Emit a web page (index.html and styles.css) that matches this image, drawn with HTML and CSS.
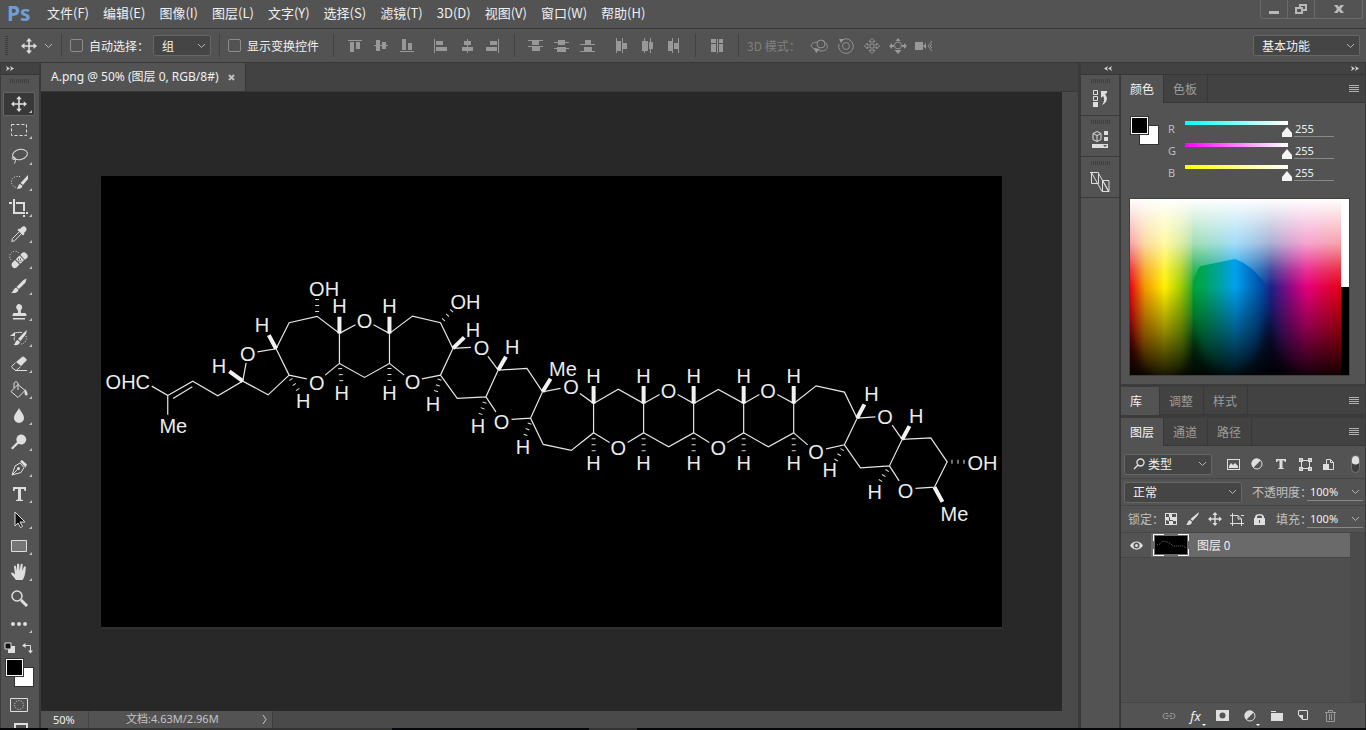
FILE: index.html
```html
<!DOCTYPE html>
<html lang="zh-CN">
<head>
<meta charset="utf-8">
<title>A.png @ 50% (图层 0, RGB/8#)</title>
<link rel="stylesheet" href="styles.css">
</head>
<body>
<div class="app">
  <header class="menubar">
    <span class="logo">Ps</span>
    <nav class="menus">
      <button>文件(F)</button><button>编辑(E)</button><button>图像(I)</button><button>图层(L)</button><button>文字(Y)</button><button>选择(S)</button><button>滤镜(T)</button><button>3D(D)</button><button>视图(V)</button><button>窗口(W)</button><button>帮助(H)</button>
    </nav>
    <div class="window-buttons">
      <button class="win" aria-label="最小化"><svg width="12" height="12"><path d="M1 8h10v3H1z"/></svg></button>
      <button class="win" aria-label="还原"><svg width="14" height="12"><path fill-rule="evenodd" d="M5 1h8v7H9v3H1V4h4zM7 3v1h2v2h2V3zM3 6v3h4V6z"/></svg></button>
      <button class="win close" aria-label="关闭"><svg width="12" height="12"><path d="M1 2h3.500L6 4l1.500-2H11L8 6l3 4H7.500L6 8l-1.500 2H1l3-4z"/></svg></button>
    </div>
  </header>

  <div class="options">
    <span class="grip-v"></span>
    <button class="tool-preset" aria-label="移动工具"><svg width="16" height="16"><path d="M8 0l3 3.500H8.800v3.700h3.700V5L16 8l-3.500 3V8.800H8.800v3.700H11L8 16l-3-3.500h2.200V8.800H3.500V11L0 8l3.500-3v2.200h3.700V3.500H5z"/></svg><svg class="chev" width="9" height="6"><path d="M1 1l3.500 3.500L8 1"/></svg></button>
    <i class="sep"></i>
    <label class="check"><input type="checkbox">自动选择：</label>
    <div class="select group-select"><select aria-label="自动选择目标"><option>组</option></select><svg class="chev" width="9" height="6"><path d="M1 1l3.500 3.500L8 1"/></svg></div>
    <i class="sep"></i>
    <label class="check"><input type="checkbox">显示变换控件</label>
    <i class="sep wide"></i>
    <div class="icons">
      <button aria-label="顶对齐"><svg width="16" height="16"><path d="M1 2h14v1H1zM3 4h4v10H3zM9 4h4v7H9z"/></svg></button>
      <button aria-label="垂直居中对齐"><svg width="16" height="16"><path d="M3 2h4v5h2V4h4v3h2v1h-2v3H9V8H7v5H3V8H1V7h2z"/></svg></button>
      <button aria-label="底对齐"><svg width="16" height="16"><path d="M1 13h14v1H1zM3 1h4v11H3zM9 5h4v7H9z"/></svg></button>
    </div>
    <div class="icons">
      <button aria-label="左对齐"><svg width="16" height="16"><path d="M1 1h1v14H1zM3 3h7v4H3zM3 9h11v4H3z"/></svg></button>
      <button aria-label="水平居中对齐"><svg width="16" height="16"><path d="M8 1h1v2h3v4H9v2h5v4H9v2H8v-2H3V9h5V7H5V3h3z"/></svg></button>
      <button aria-label="右对齐"><svg width="16" height="16"><path d="M13 1h1v14h-1zM5 3h7v4H5zM1 9h11v4H1z"/></svg></button>
    </div>
    <i class="sep"></i>
    <div class="icons">
      <button aria-label="按顶分布"><svg width="16" height="16"><path d="M0 2h15v1h-4v4H4V3H0zM0 8h15v1h-3v4H4V9H0z"/></svg></button>
      <button aria-label="垂直居中分布"><svg width="16" height="16"><path d="M4 2h7v2h4v1h-4v2H4V5H0V4h4zM3 9h9v1h3v1h-3v3H3v-3H0v-1h3z"/></svg></button>
      <button aria-label="按底分布"><svg width="16" height="16"><path d="M5 2h6v4h4v1H0V6h5zM4 9h8v4h3v1H0v-1h4z"/></svg></button>
    </div>
    <div class="icons">
      <button aria-label="按左分布"><svg width="16" height="16"><path d="M2 0h1v3h4v10H3v2H2zM8 0h1v5h4v6H9v4H8z"/></svg></button>
      <button aria-label="水平居中分布"><svg width="16" height="16"><path d="M4 0h1v3h3v10H5v2H4v-2H2V3h2zM10 0h1v4h2v7h-2v4h-1v-4H9V4h1z"/></svg></button>
      <button aria-label="按右分布"><svg width="16" height="16"><path d="M6 0h1v15H6v-2H2V3h4zM12 0h1v15h-1v-4H8V5h4z"/></svg></button>
    </div>
    <i class="sep"></i>
    <div class="icons"><button aria-label="自动对齐图层"><svg width="16" height="16"><path d="M2 1h5v4H2zM2 6h5v8H2zM8 1h1v14H8zM10 1h4v4h-4zM10 6h4v8h-4z"/></svg></button></div>
    <i class="sep"></i>
    <span class="mode">3D 模式：</span>
    <div class="icons dim">
      <button aria-label="旋转 3D 对象"><svg class="line" width="20" height="16"><circle cx="11" cy="6" r="4"/><path d="M7 4C0 5-1 9 6 12M13 3c6 3 6 10-2 10H9"/><path class="solid" d="M4 10l6 1-4 4z"/></svg></button>
      <button aria-label="滚动 3D 对象"><svg class="line" width="18" height="16"><circle cx="9" cy="8" r="3.500"/><path d="M5 2a7.300 7.300 0 1 1-3 4"/><path class="solid" d="M2 1h5L4 5z"/></svg></button>
      <button aria-label="拖动 3D 对象"><svg class="line" width="18" height="16"><path d="M9 .5l3 3h-2V7h3.500V5l3 3-3 3V9H10v3.500h2l-3 3-3-3h2V9H4.500v2l-3-3 3-3v2H8V3.500H6z"/></svg></button>
      <button aria-label="滑动 3D 对象"><svg class="line" width="18" height="16"><circle cx="9" cy="7.500" r="3.500"/><path class="solid" d="M9 0l2.500 3h-5zM9 16l3.500-4h-7zM0 8l3-3v2h2v2H3v2zM18 8l-3-3v2h-2v2h2v2z"/></svg></button>
      <button aria-label="缩放 3D 对象"><svg class="line" width="18" height="16"><path class="solid" d="M0 4h8v8H0zM8 8l3-3v6z"/><path d="M17 3l-4 5 4 5M17 6l-2 2 2 2"/></svg></button>
    </div>
    <div class="select workspace-select"><select aria-label="工作区"><option>基本功能</option></select><svg class="chev" width="9" height="6"><path d="M1 1l3.500 3.500L8 1"/></svg></div>
  </div>

  <div class="body">
    <aside class="toolbar">
      <button class="strip-head" aria-label="展开工具栏"><svg width="8" height="5"><path d="M0 0l4 2.500L0 5 1 2.500zM4 0l4 2.500L4 5l1-2.500z"/></svg></button>
      <div class="grip-h"></div>
      <div class="tools">
        <button class="tool active" aria-label="移动"><svg viewBox="0 0 20 20"><path class="f" d="M10 2l2.800 3.300h-2V9.200h4V7.200L18 10l-3.200 2.800v-2h-4v4h2L10 18l-2.800-3.200h2v-4h-4v2L2 10l3.200-2.800v2h4v-4h-2z"/></svg></button>
        <button class="tool" aria-label="矩形选框"><svg viewBox="0 0 20 20"><path class="s" stroke-dasharray="3 2" d="M2.500 4.500h15v11h-15z"/></svg></button>
        <button class="tool" aria-label="套索"><svg viewBox="0 0 20 20"><ellipse class="s" cx="11" cy="8.500" rx="7.500" ry="5" transform="rotate(-12 11 8.500)"/><path class="s" d="M5 11c-3 0-2 3 0 2.500s1.500-2 0-2.500M6 13c1 2 0 4-1 4.500"/></svg></button>
        <button class="tool" aria-label="快速选择"><svg viewBox="0 0 20 20"><path class="s" stroke-dasharray="1 1.500" d="M11 4.500H8a5.500 5.500 0 0 0 0 11"/><path class="f" d="M19 3v4l-5 6-2.500-2zM11 12l2.500 2c-1 3-3 3-6 2.500 2-1 1.500-4 3.500-4.500z"/></svg></button>
        <button class="tool" aria-label="裁剪"><svg viewBox="0 0 20 20"><path class="f" d="M0 4h3v2H0zM4 1h2v13h10v2H4zM7 4h9v9h-2V6H7zM14 17h2v2h-2zM17 14h2v2h-2z"/></svg></button>
        <button class="tool" aria-label="吸管"><svg viewBox="0 0 20 20"><path class="f" d="M13 3c2-2 6 1 4 4l-2 2 .5 1L14 11.500 8.500 6 10 4.500l1 .5z"/><path class="s" d="M10 8l-6.500 6.500-.8 3 3-.8L12 10"/></svg></button>
        <button class="tool" aria-label="污点修复"><svg viewBox="0 0 20 20"><path class="s" stroke-dasharray="1 1.500" d="M2 10a5 5 0 0 1 8-7"/><path class="f" fill-rule="evenodd" d="M3 13l3-3 4.500 4.500-3 3c-3 2-6-1-4.500-4.500zM6.800 9.200l3.700-3.700 4.500 4.500-3.700 3.700zM11.300 4.700l2-2c2-2 7 2 5 5l-2.500 2zM9 8.500v1.500h1V8.500zM11 8.500V10h1V8.500zM9.500 10.500v1.300h1v-1.300zM11.500 10.500v1.300h1v-1.300z"/></svg></button>
        <button class="tool" aria-label="画笔"><svg viewBox="0 0 20 20"><path class="f" d="M17.500 2.500l-1 4-6.500 6.500-2.500-2 7-7zM7 11.500l2.500 2c-.5 3-3 4-7.500 3.500 2.500-1 2-4 5-5.500z"/></svg></button>
        <button class="tool" aria-label="仿制图章"><svg viewBox="0 0 20 20"><path class="f" d="M10 2a3.300 3.300 0 0 1 3 4.500C12 8 11.500 9 12 11h4c1 0 1.500 1 1.500 3h-14c0-2 .5-3 1.500-3h4c.5-2-.5-3-1.500-4.500C6.500 4.500 8 2 10 2zM4 16h12v1.500H4z"/></svg></button>
        <button class="tool" aria-label="历史记录画笔"><svg viewBox="0 0 20 20"><path class="f" d="M18 2l-1 4-5.500 7-2.500-2 5.500-6zM8.500 12l2.500 2c-1 3-3 3.500-6.500 3 2-1 1.500-4 4-5zM1 8l5-4v4z"/><path class="s" d="M5 5.500c2-1 5-1.500 8-1M6 8.500c-1 1.500-1 2-.5 4"/><path class="s" stroke-dasharray="1 1.500" d="M17 8c1 4-1 8-5 8"/></svg></button>
        <button class="tool" aria-label="橡皮擦"><svg viewBox="0 0 20 20"><path class="f" d="M7 8l6-5c1-1 2-.5 5 3l-6 6z"/><path class="s" d="M6.500 8.800L3 12c-.7.700-.5 1 0 1.500L6 16c.6.500 1 .5 1.700 0l3.800-3.200M6 16.500h12"/></svg></button>
        <button class="tool" aria-label="油漆桶"><svg viewBox="0 0 20 20"><path class="s" d="M9 4.500l7 6-7 7-7-6zM9 10V4c0-3-4-3-4 0v4"/><path class="f" d="M16 9c2.500 3 3.500 6 1.500 6.500S15 12 16 9z"/></svg></button>
        <button class="tool" aria-label="模糊"><svg viewBox="0 0 20 20"><path class="f" d="M10 2c2 4 5 6.500 5 10a5 5 0 0 1-10 0c0-3.500 3-6 5-10z"/></svg></button>
        <button class="tool" aria-label="减淡"><svg viewBox="0 0 20 20"><path class="f" d="M12 2.500a5 5 0 1 1-2.500 9.200L3.500 17.500 2 16l6-6A5 5 0 0 1 12 2.500z"/></svg></button>
        <button class="tool" aria-label="钢笔"><svg viewBox="0 0 20 20"><path class="s" d="M3 17L6 8l5-3 4 4.500-3 5zM3 17l6-6"/><circle class="f" cx="9.500" cy="10.500" r="1.500"/><path class="f" d="M11 3.500l2-1.500 5 4.500-1.500 3z"/></svg></button>
        <button class="tool" aria-label="文字"><svg viewBox="0 0 20 20"><path class="f" d="M4 3h13v4h-1.500L15 5h-3v10.500l2 .5v1H7v-1l2-.5V5H6l-.5 2H4z"/></svg></button>
        <button class="tool" aria-label="路径选择"><svg viewBox="0 0 20 20"><path class="outlined" d="M6 2v14l3-3 2.500 4.500 2-1L11 12h5z"/></svg></button>
        <button class="tool" aria-label="矩形"><svg viewBox="0 0 20 20"><path class="s shape" d="M2.500 4.500h15v11h-15z"/></svg></button>
        <button class="tool" aria-label="抓手"><svg viewBox="0 0 20 20"><path class="f" d="M7 18c-2-3-5-5.500-5-7 1-1.500 2.500 0 4 1.500L5 4.500c.5-1.500 1.800-1 2 0L8 9V2.500c.5-1.500 2-1.500 2.200 0L10.500 9l1.200-6.500c.5-1.300 2-1 2 .3L13.200 9l1.700-4c.7-1.200 2-.6 1.900.5C16.500 10 16 15 13.500 18z"/></svg></button>
        <button class="tool bare" aria-label="缩放"><svg viewBox="0 0 20 20"><circle class="s lensring" cx="8" cy="8" r="5"/><path class="s thick2" d="M12 12l6 6"/></svg></button>
        <button class="tool" aria-label="更多工具"><svg viewBox="0 0 20 20"><circle class="f" cx="4" cy="10" r="2"/><circle class="f" cx="10" cy="10" r="2"/><circle class="f" cx="16" cy="10" r="2"/></svg></button>
      </div>
      <div class="mini-row">
        <button aria-label="默认颜色"><svg width="12" height="12"><path class="f" d="M4 4h7v7H4z"/><path class="outlined" d="M1 1h6v6H1z"/></svg></button>
        <button aria-label="切换颜色"><svg width="12" height="12"><path class="s" d="M3 3.500h5.500V9"/><path class="f" d="M0 3.500L3.500 1v5zM8.500 11.500L6 8.500h5z"/></svg></button>
      </div>
      <div class="swatches"><span class="swatch back"></span><span class="swatch fore"></span></div>
      <button class="mask" aria-label="快速蒙版"><svg width="18" height="14"><path class="s" d="M.5 .5h17v13H.5z"/><circle class="s" stroke-dasharray="1 1.500" cx="9" cy="7" r="4.500"/></svg></button>
      <button class="mask screen" aria-label="屏幕模式"><svg width="14" height="10"><path class="s thick" d="M1 1h12v8H1z"/></svg></button>
    </aside>

    <main class="document">
      <div class="doc-tabs"><div class="doc-tab">A.png @ 50% (图层 0, RGB/8#)<button aria-label="关闭文档"><svg width="7" height="7"><path d="M1 1l5 5M6 1L1 6"/></svg></button></div></div>
      <div class="stage">
        <div class="viewport">
          <svg class="artboard" viewBox="101 176 900 450" role="img" aria-label="分子结构">
            <path class="bond" d="M151.700 386L167.700 395.300V414.700M167.700 395.300L192.700 381L217.700 395.700L242.700 381L246 362.700M173 398.300L192.300 386.700M257.300 351.700L276 348.700L289 322.700L317 316.300L339.300 333.300V363.300L364.300 377.300L389.300 363.300V333.300L373.300 324.700M339.300 333.300L355.300 324.700M339.300 363.300L325 375M306.700 378.700L289 375L276 348.700M289 375L268 394.700L242.700 381"/>
            <path class="bond" d="M389.300 333.300L412.300 316L440.300 322.700L452.700 348.300L440.300 375L421.700 378.700M404 375L389.300 363.300M452.700 348.300L470.700 347.300M487.700 356.300L498 370L526.700 368.300L542.300 391.700L560.300 388.300M440.300 375L457 398.300L485.700 396.700L498 370M485.700 396.700L495.700 411.700M511.300 419.300L530.300 418L542.300 391.700M530.300 418L543 444.300L571 450.300L593.300 432.700V403.300L579.700 393.300"/>
            <path class="bond" d="M593.300 403.300L618 389L643.300 403.300V432.700L627.300 442.300M593.300 432.700L609.300 442.300M643.300 403.300L659.300 394.300M677.300 394.300L693.300 403.300V432.700L668.300 446.700L643.300 432.700M693.300 403.300L718 389.300L743.300 403.300V432.700L727 442.300M693.300 432.700L709 442.300M743.300 403.300L759 394.300M777 394.300L793.300 403.300V432.700L768 446.700L743.300 432.700"/>
            <path class="bond" d="M793.300 403.300L815.700 385.700L844 392L856.700 418L844 444.700L825.700 448.700M807.300 444.700L793.300 432.700M856.700 418L875 416.700M891.700 425L901.700 439.300L930.300 437.700L946.700 461.700L934 487L915 488.300M898.700 480.700L889 465.700L901.700 439.300M889 465.700L860 467.700L844 444.700"/>
            <path class="wedge" d="M242.700 381L229.300 371.300M276 348.700L268.700 335M339.300 333.300V316.700M389.300 333.300V316.700M452.700 348.300L464 337.300M498 370L505.700 356.700M542.300 391.700L550.300 378.700M593.300 403.300V386M643.300 403.300V386M693.300 403.300V386M743.300 403.300V386M793.300 403.300V386M856.700 418L864 404.300M901.700 439.300L909 426M934 487L942 501.700"/>
            <path class="hash" d="M317 299V313M290.500 379L298 390M340 368L341.500 385M389.300 368V385M443 320L452 310M439.500 379L435 394M484.500 402L480 415M529.500 423L524.500 437M593.300 438V454M643.300 438V454M693.300 438V454M743.300 438V454M793.300 438V454M842 449L835 461M887 470L879 482M951 461.700H966"/>
            <g class="atoms">
              <text x="127.800" y="389">OHC</text><text x="173.300" y="433">Me</text><text x="219" y="373">H</text><text x="247.700" y="361">O</text><text x="262" y="332">H</text><text x="324" y="296">OH</text><text x="339.300" y="313">H</text><text x="364.300" y="328">O</text><text x="389.300" y="313">H</text><text x="316.700" y="390">O</text><text x="303" y="408">H</text><text x="341.700" y="400">H</text><text x="389.300" y="400">H</text>
              <text x="465.300" y="309">OH</text><text x="472.700" y="337">H</text><text x="481.300" y="355">O</text><text x="512" y="354">H</text><text x="562.700" y="376">Me</text><text x="570.700" y="394">O</text><text x="412.300" y="389">O</text><text x="432.700" y="411">H</text><text x="501.300" y="429">O</text><text x="477.700" y="433">H</text><text x="522.700" y="454">H</text>
              <text x="593.300" y="383">H</text><text x="643.300" y="383">H</text><text x="693.300" y="383">H</text><text x="743.300" y="383">H</text><text x="793.300" y="383">H</text><text x="668.300" y="398">O</text><text x="767.700" y="398">O</text><text x="618" y="455">O</text><text x="718" y="455">O</text><text x="593.300" y="470">H</text><text x="643.300" y="470">H</text><text x="693.300" y="470">H</text><text x="743.300" y="470">H</text><text x="793.300" y="470">H</text>
              <text x="871" y="401">H</text><text x="884.700" y="424">O</text><text x="915.700" y="423">H</text><text x="982" y="470">OH</text><text x="954" y="521">Me</text><text x="905" y="498">O</text><text x="815.700" y="459">O</text><text x="829.300" y="477">H</text><text x="874.300" y="499">H</text>
            </g>
          </svg>
        </div>
        <div class="scroll"></div>
      </div>
      <footer class="status"><input class="zoom" aria-label="缩放比例" value="50%"><span class="size">文档:4.63M/2.96M</span><button aria-label="状态选项"><svg width="5" height="11"><path d="M1 1l3 4.500L1 10"/></svg></button></footer>
    </main>

    <aside class="dock">
      <div class="dock-heads">
        <button class="strip-head" aria-label="展开面板"><svg width="8" height="5"><path d="M4 0L0 2.500 4 5 3 2.500zM8 0L4 2.500 8 5 7 2.500z"/></svg></button>
        <button class="strip-head" aria-label="折叠面板"><svg width="8" height="5"><path d="M0 0l4 2.500L0 5 1 2.500zM4 0l4 2.500L4 5l1-2.500z"/></svg></button>
      </div>
      <div class="dock-body">
        <div class="rail">
          <button aria-label="历史记录"><i class="grip"></i><svg width="16" height="18"><path class="s" d="M1.500 .5h4v4h-4zM1.500 6.500h4v4h-4z"/><path class="f" d="M1 12h5v5H1zM9 1h6v2l-2 1c4 5 1 9-3 11 2-3 3-6 1-9L9 8z"/></svg></button>
          <button aria-label="属性"><i class="grip"></i><svg width="16" height="18"><path class="s" fill-opacity=".3" d="M5 .5l4 2v6l-4 2-4-2v-6zM1 2.500l4 2 4-2M5 4.500v6"/><path class="f" d="M12 0h4v4h-4zM12 6h4v4h-4z"/><path class="f" fill-rule="evenodd" d="M0 13h16v4H0zM11 14l2 2 2-2z"/></svg></button>
          <button aria-label="样式库"><i class="grip"></i><svg width="20" height="20"><path class="s" d="M0 .5h8L19 19.500h-7L1.500 .5v11h7v-11M12.500 8.500h6.500v11h-6.500zM12.500 8.500l6 11"/></svg></button>
        </div>
        <div class="panels">
          <section class="panel color-panel">
            <div class="tabs"><button class="tab on">颜色</button><button class="tab">色板</button><button class="menu" aria-label="面板菜单"></button></div>
            <div class="color-top">
              <div class="swatches"><span class="swatch back"></span><span class="swatch fore"></span></div>
              <div class="sliders">
                <label for="r">R</label><input id="r" class="range r" type="range" max="255" value="255"><input class="num" aria-label="R 值" value="255">
                <label for="g">G</label><input id="g" class="range g" type="range" max="255" value="255"><input class="num" aria-label="G 值" value="255">
                <label for="b">B</label><input id="b" class="range b" type="range" max="255" value="255"><input class="num" aria-label="B 值" value="255">
              </div>
            </div>
            <svg class="spectrum" viewBox="0 0 219 176" preserveAspectRatio="none">
              <defs>
                <linearGradient id="hue" gradientUnits="userSpaceOnUse" x1="0" x2="211" y1="0" y2="0"><stop offset="0" stop-color="#e60012"/><stop offset=".07" stop-color="#f39800"/><stop offset=".165" stop-color="#fff100"/><stop offset=".24" stop-color="#a6ce00"/><stop offset=".29" stop-color="#3fae28"/><stop offset=".3" stop-color="#00a33c"/><stop offset=".34" stop-color="#00a650"/><stop offset=".5" stop-color="#00a0ee"/><stop offset=".62" stop-color="#0050a8"/><stop offset=".67" stop-color="#1d2088"/><stop offset=".76" stop-color="#920783"/><stop offset=".835" stop-color="#e4007f"/><stop offset="1" stop-color="#e60012"/></linearGradient>
                <linearGradient id="tint" x2="0" y2="1"><stop offset="0" stop-color="#fff"/><stop offset=".25" stop-color="#fff" stop-opacity=".64"/><stop offset=".4" stop-color="#fff" stop-opacity=".2"/><stop offset=".5" stop-color="#fff" stop-opacity="0"/></linearGradient>
                <linearGradient id="shade" x2="0" y2="1"><stop offset=".5" stop-opacity="0"/><stop offset=".75" stop-opacity=".42"/><stop offset="1" stop-opacity=".9"/></linearGradient>
                <clipPath id="vivid"><path d="M62 89C64 78 68 68 71 67L105 60C116 64 127 72 137 88V91H62z"/></clipPath>
                <filter id="soft"><feGaussianBlur stdDeviation="4"/></filter>
                <clipPath id="field"><path d="M0 0h211v176H0z"/></clipPath>
              </defs>
              <path fill="url(#hue)" d="M0 0h211v176H0z"/><path fill="url(#tint)" d="M0 0h211v176H0z"/>
              <path fill="url(#hue)" clip-path="url(#vivid)" d="M0 0h211v176H0z"/>
              <path fill="url(#shade)" d="M0 0h211v176H0z"/>
              <g clip-path="url(#field)"><path fill="#000" filter="url(#soft)" opacity=".5" d="M-6 110C5 150 15 180 30 180H45C60 170 61 140 62 120C66 150 75 172 100 176C120 176 135 145 138 110C143 145 152 170 175 178L220 178V190H-9z"/></g>
              <path fill="#fff" d="M211 0h8v88h-8z"/><path fill="#000" d="M211 88h8v88h-8z"/>
            </svg>
          </section>
          <section class="panel library"><div class="tabs"><button class="tab on">库</button><button class="tab">调整</button><button class="tab">样式</button><button class="menu" aria-label="面板菜单"></button></div></section>
          <section class="panel layers-panel">
            <div class="tabs"><button class="tab on">图层</button><button class="tab">通道</button><button class="tab">路径</button><button class="menu" aria-label="面板菜单"></button></div>
            <div class="row filter">
              <div class="select kind"><svg class="lens" width="12" height="12"><circle cx="7.500" cy="4.500" r="3.500"/><path d="M5 7l-4 4"/></svg><select aria-label="滤镜类型"><option>类型</option></select><svg class="chev" width="9" height="6"><path d="M1 1l3.500 3.500L8 1"/></svg></div>
              <div class="icons">
                <button aria-label="像素图层"><svg width="13" height="11"><path fill-rule="evenodd" d="M0 0h13v11H0zM1 1v9h11V1zM2 9V7l2-3 2 2 2-2 3 3v2z"/></svg></button>
                <button aria-label="调整图层"><svg width="12" height="12"><circle class="s" cx="6" cy="6" r="5"/><path d="M9.500 2.500A5 5 0 1 0 2.500 9.500z"/></svg></button>
                <button aria-label="文字图层"><svg width="12" height="12"><path d="M1 1h10v3h-1L9 2.500H7.500V10l1.500.5v.5H3v-.5l1.500-.5V2.500H3L2 4H1z"/></svg></button>
                <button aria-label="形状图层"><svg width="13" height="13"><path class="s" d="M2.500 2.500h8v8h-8z"/><path fill-rule="evenodd" d="M0 0h4v4H0zM9 0h4v4H9zM0 9h4v4H0zM9 9h4v4H9zM1.500 1.500v1h1v-1zM10.500 1.500v1h1v-1zM1.500 10.500v1h1v-1zM10.500 10.500v1h1v-1z"/></svg></button>
                <button aria-label="智能对象"><svg width="12" height="13"><path class="s" d="M3.500 7V1.500h4l3 3v7H6M7.500 1.500v3h3"/><path d="M0 6h6v6H0z"/></svg></button>
              </div>
              <button class="toggle" aria-label="图层过滤开关"></button>
            </div>
            <div class="row blend">
              <div class="select mode-select"><select aria-label="混合模式"><option>正常</option></select><svg class="chev" width="9" height="6"><path d="M1 1l3.500 3.500L8 1"/></svg></div>
              <label class="percent"><span>不透明度：</span><b class="field"><input value="100%"><svg class="chev" width="9" height="6"><path d="M1 1l3.500 3.500L8 1"/></svg></b></label>
            </div>
            <div class="row lock">
              <span class="caption">锁定：</span>
              <div class="icons">
                <button aria-label="锁定透明像素"><svg width="12" height="12"><path fill-rule="evenodd" d="M0 0h12v12H0zM1 1v3h3V1zM7 1v3h1v3H5V4H4v4h4v3h3V8H8V4h3V1zM1 7v4h3V8z"/></svg></button>
                <button aria-label="锁定图像像素"><svg width="14" height="14"><path d="M13 0l-1 3-5.500 6L4.500 7zM4 8l2 2c-.5 3-3 3-6 3 2-1 1-4 4-5z"/></svg></button>
                <button aria-label="锁定位置"><svg width="14" height="14" viewBox="0 0 16 16"><path d="M8 0l3 3.500H8.800v3.700h3.700V5L16 8l-3.500 3V8.800H8.800v3.700H11L8 16l-3-3.500h2.200V8.800H3.500V11L0 8l3.500-3v2.200h3.700V3.500H5z"/></svg></button>
                <button aria-label="锁定画板"><svg width="14" height="13"><path class="s" d="M0 2.500h8M2.500 0v13M0 10.500h14M11.500 6v7M8 2.500l3.500 3.500M8 2.500V6h3.500M11 2.500h3"/></svg></button>
                <button aria-label="全部锁定"><svg width="11" height="13"><path fill-rule="evenodd" d="M1 5V4C1 0 10 0 10 4v1h1v7H0V5zM3 5h5V4C8 2 3 2 3 4zM5 7v3h1V7z"/></svg></button>
              </div>
              <label class="percent"><span>填充：</span><b class="field"><input value="100%"><svg class="chev" width="9" height="6"><path d="M1 1l3.500 3.500L8 1"/></svg></b></label>
            </div>
            <div class="layer-list">
              <div class="layer-items">
                <div class="layer"><button class="eye" aria-label="图层可见性"><svg width="13" height="9"><path fill-rule="evenodd" d="M0 4.500C3-1 10-1 13 4.500 10 10 3 10 0 4.500zM6.500 1.500a3 3 0 1 0 0 6 3 3 0 0 0 0-6z"/><circle cx="6.500" cy="4.500" r="1.500"/></svg></button>
                <svg class="thumb" width="36" height="22"><path fill="#000" d="M2 2h32v18H2z"/><path class="mini" stroke-dasharray="1 1" d="M4 11l3-1 3-3 4 1 4 2 2 2 5 0 5 0 3 2"/><path class="corners" d="M.5 7V.5H11M25 .5h10.500V7M.5 15v6.500H11M25 21.500h10.500V15"/></svg>
                <span>图层 0</span></div>
              </div>
              <div class="layer-scroll"></div>
            </div>
            <div class="layer-foot">
              <button class="off" aria-label="链接图层"><svg width="14" height="8"><path class="s" d="M6 1.500H3.500a2.500 2.500 0 0 0 0 5H6M8 1.500h2.500a2.500 2.500 0 0 1 0 5H8M4 4h6"/></svg></button>
              <button class="fx drop">fx</button>
              <button aria-label="添加蒙版"><svg width="13" height="11"><path fill-rule="evenodd" d="M0 0h13v11H0zM6.500 2.500a3 3 0 1 0 0 6 3 3 0 0 0 0-6z"/></svg></button>
              <button class="drop" aria-label="新建调整图层"><svg width="12" height="12"><circle class="s" cx="6" cy="6" r="5"/><path d="M9.500 2.500A5 5 0 1 0 2.500 9.500z"/></svg></button>
              <button aria-label="新建组"><svg width="12" height="10"><path d="M0 0h5v1H0zM0 2h12v8H0z"/></svg></button>
              <button aria-label="新建图层"><svg width="11" height="11"><path class="s" d="M.5 5V.5h9v9H5"/><path d="M0 5h5v5.500z"/></svg></button>
              <button class="off" aria-label="删除图层"><svg width="11" height="12"><path class="s" d="M0 2.500h11M3.500 2V.5h4V2M1.500 2.500v9h8v-9M4.500 4v6M6.500 4v6"/></svg></button>
            </div>
          </section>
        </div>
      </div>
    </aside>
  </div>
  <div class="taskbar"></div>
</div>
</body>
</html>
```

FILE: styles.css
```css
* { box-sizing: border-box; }
body { margin: 0; background: #000; color: #f0f0f0; font: 12px/16px "Noto Sans CJK SC", "Noto Sans", sans-serif; }
button, input, select { margin: 0; padding: 0; border: 0; background: none; color: inherit; font: inherit; border-radius: 0; }
button { display: flex; align-items: center; justify-content: center; }
svg { display: block; flex: none; fill: #dedede; }
.f { fill: #dedede; stroke: none; }
.s { fill: none; stroke: #dedede; stroke-width: 1; }
.thick { stroke-width: 2; }
.thick2 { stroke-width: 3; }
.lensring { stroke-width: 1.5; }
.shape { fill: #757575; }
.outlined { fill: #111; stroke: #dedede; }
.chev { fill: none; stroke: #b4b4b4; }
.app { display: flex; flex-direction: column; height: 100vh; overflow: hidden; background: #535353; }

.menubar { display: flex; flex: none; height: 29px; border-bottom: 1px solid #383838; }
.logo { width: 39px; padding-left: 7px; color: #6fa0d4; font: bold 21px/26px "Noto Sans", sans-serif; }
.menus { display: flex; flex: 1; height: 26px; gap: 14px; padding-left: 8px; font-size: 13px; }
.window-buttons { display: flex; height: 19px; margin-right: 3px; border: 1px solid #6a6a6a; border-top: 0; border-radius: 0 0 3px 3px; }
.win { width: 27px; border-right: 1px solid #6a6a6a; }
.win svg { fill: #b8b8b8; }
.close { width: 47px; border: 0; }

.options { display: flex; align-items: center; flex: none; height: 34px; padding: 0 6px 0 5px; border-bottom: 1px solid #383838; }
.grip-v { width: 3px; height: 19px; background: repeating-linear-gradient(#3c3c3c 0 1px, transparent 1px 2px); }
.tool-preset { gap: 7px; margin-left: 13px; }
.sep { width: 1px; height: 23px; margin: 0 8px; background: #424242; }
.wide { margin-left: 14px; }
.check { display: flex; align-items: center; gap: 6px; white-space: nowrap; }
.check input { appearance: none; width: 13px; height: 13px; border: 1px solid #8c8c8c; border-radius: 2px; }
.select { display: flex; align-items: center; height: 21px; padding-right: 4px; border: 1px solid #666; border-radius: 2px; background: #454545; }
.select select { appearance: none; flex: 1; min-width: 0; padding-left: 8px; }
.group-select { width: 58px; margin-left: 4px; }
.icons { display: flex; align-items: center; }
.options .icons button { width: 26px; height: 24px; }
.options .icons svg { fill: #989898; }
.options .icons + .icons { margin-left: 8px; }
.mode { width: 60px; color: #808080; white-space: nowrap; }
.options .icons .line { fill: none; stroke: #929292; }
.options .icons .solid { fill: #989898; stroke: none; }
.workspace-select { width: 107px; margin-left: auto; }

.body { display: flex; flex: 1; min-height: 0; border-left: 1px solid #3c3c3c; }
.strip-head { height: 12px; background: #424242; border-bottom: 1px solid #363636; }
.strip-head svg { fill: #d0d0d0; }
.toolbar { display: flex; flex-direction: column; flex: none; width: 40px; overflow: hidden; border-right: 2px solid #3a3a3a; }
.toolbar .strip-head { flex: none; justify-content: flex-start; padding-left: 5px; }
.grip-h { flex: none; width: 19px; height: 4px; margin: 4px 0 9px 9px; background: repeating-linear-gradient(90deg, #3f3f3f 0 1px, transparent 1px 2px); }
.tools { display: flex; flex-direction: column; flex: none; gap: 2px; padding-left: 2px; }
.tool { position: relative; width: 32px; height: 24px; border: 1px solid transparent; border-radius: 2px; }
.tool svg { width: 20px; height: 20px; }
.active { background: #383838; border-color: #646464; }
.tool::after { content: ""; position: absolute; right: 2px; bottom: 2px; border: solid transparent; border-width: 3px 0 0 3px; border-bottom: 3px solid #c0c0c0; border-top: 0; }
.bare::after { display: none; }
.mini-row { display: flex; flex: none; gap: 6px; margin: 6px 0 4px 3px; }
.swatches { display: grid; flex: none; grid-template-columns: 9px 10px 10px; grid-template-rows: 9px 10px 10px; }
.swatch { border: 1px solid #333; box-shadow: inset 0 0 0 1px #fff; }
.back { grid-area: 2 / 2 / 4 / 4; background: #fff; }
.fore { grid-area: 1 / 1 / 3 / 3; background: #000; }
.toolbar .swatches { margin-left: 4px; }
.mask { flex: none; margin: 11px 0 0 9px; width: 18px; }
.screen { margin-left: 11px; }

.document { display: flex; flex-direction: column; flex: 1; min-width: 0; }
.doc-tabs { flex: none; height: 29px; background: #424242; border-bottom: 1px solid #383838; display: flex; }
.doc-tab { display: flex; align-items: center; gap: 9px; padding: 0 10px; background: #535353; border-right: 1px solid #383838; font: 12px/16px "Noto Sans", "Noto Sans CJK SC", sans-serif; }
.doc-tab svg { stroke: #c0c0c0; stroke-width: 2; }
.stage { display: flex; flex: 1; min-height: 0; }
.viewport { display: flex; align-items: center; justify-content: center; flex: 1; min-width: 0; background: #282828; overflow: hidden; }
.artboard { width: 88.2%; aspect-ratio: 2; background: #000; box-shadow: 0 2px 2px #343434; }
.scroll { width: 16px; background: #4a4a4a; }
.bond { fill: none; stroke: #e6e6e6; stroke-width: 1.2; }
.wedge { fill: none; stroke: #f2f2f2; stroke-width: 4; }
.hash { fill: none; stroke: #dedede; stroke-width: 4; stroke-dasharray: 1 5; }
.atoms { fill: #ececec; font: 20px "Liberation Sans", Arial, sans-serif; text-anchor: middle; }
.status { display: flex; flex: none; height: 17px; background: #4a4a4a; font: 11px/16px "Noto Sans", "Noto Sans CJK SC", sans-serif; }
.status > * { background: #535353; }
.zoom { width: 48px; padding-left: 12px; border-right: 1px solid #444; }
.size { width: 132px; padding-left: 37px; color: #c4c4c4; white-space: nowrap; }
.status button { width: 52px; padding-left: 35px; border-right: 1px solid #3e3e3e; }
.status button svg { fill: none; stroke: #c8c8c8; }

.dock { display: flex; flex-direction: column; flex: none; width: 288px; border-left: 3px solid #3a3a3a; border-right: 1px solid #3a3a3a; }
.dock-heads { display: flex; flex: none; justify-content: space-between; background: #424242; }
.dock-heads .strip-head { padding: 0 6px 0 23px; }
.dock-heads .strip-head:last-child { flex: 1; justify-content: flex-end; }
.dock-body { display: flex; flex: 1; min-height: 0; }
.rail { width: 39px; flex: none; border-right: 1px solid #3c3c3c; }
.rail button { width: 100%; height: 41px; flex-direction: column; justify-content: flex-start; gap: 7px; padding-top: 4px; border-bottom: 1px solid #3c3c3c; }
.rail .grip { width: 19px; height: 4px; background: repeating-linear-gradient(90deg, #3f3f3f 0 1px, transparent 1px 2px); }
.panels { display: flex; flex-direction: column; flex: 1; min-width: 0; gap: 3px; border-left: 1px solid #383838; background: #3c3c3c; }
.panel { flex: none; background: #535353; }
.tabs { display: flex; height: 28px; background: #424242; border-bottom: 1px solid #383838; }
.tab { padding: 0 10px 0 9px; border-right: 1px solid #383838; color: #9c9c9c; }
.on { height: 28px; padding-right: 9px; background: #535353; color: #f4f4f4; }
.library .on { padding-right: 17px; }
.menu { width: 10px; height: 7px; margin: auto 6px auto auto; background: repeating-linear-gradient(#b0b0b0 0 1px, transparent 1px 2px); }
.color-panel { height: 309px; }
.color-top { display: flex; padding: 13px 0 0 9px; }
.sliders { display: grid; grid-template-columns: 9px 113px 40px; grid-auto-rows: 22px; column-gap: 2px; margin-left: 9px; color: #bdbdbd; font: 11px/16px "Noto Sans", sans-serif; }
.sliders label { padding-top: 5px; }
.range { appearance: none; height: 17px; margin-top: 4px; background: linear-gradient(90deg, #0ff, #fff) 6px 1px / 103px 4px no-repeat; }
.g { background-image: linear-gradient(90deg, #f0f, #fff); }
.b { background-image: linear-gradient(90deg, #ff0, #fff); }
.range::-webkit-slider-thumb { appearance: none; width: 10px; height: 10px; margin-top: 7px; background: #f4f4f4; clip-path: polygon(50% 0, 100% 60%, 100% 100%, 0 100%, 0 60%); }
.num { height: 17px; width: 40px; margin-top: 4px; padding-left: 1px; border-bottom: 1px solid #888; color: #f0f0f0; }
.spectrum { width: calc(100% - 23px); height: 178px; margin: 16px 0 0 8px; border: 1px solid #404040; }
.layers-panel { display: flex; flex-direction: column; flex: 1; min-height: 0; }
.row { display: flex; align-items: center; flex: none; height: 27px; border-bottom: 1px solid #464646; padding: 0 2px 0 3px; }
.filter { height: 33px; padding-top: 4px; }
.kind { width: 88px; padding-left: 8px; }
.kind select { padding-left: 3px; }
.lens { fill: none; stroke: #dedede; stroke-width: 1.4; }
.filter .icons { margin-left: 9px; }
.filter .icons button { width: 24px; height: 20px; }
.toggle { width: 9px; height: 18px; margin: 0 3px 0 auto; border-radius: 5px; border: 1px solid #707070; background: radial-gradient(circle at 50% 4px, #e0e0e0 0 4px, #3e3e3e 5px); }
.mode-select { width: 118px; }
.percent { display: flex; align-items: center; margin-left: auto; color: #c0c0c0; }
.percent span { margin-right: -5px; white-space: nowrap; }
.field { display: flex; align-items: center; width: 56px; height: 17px; border-bottom: 1px solid #888; }
.percent input { width: 44px; height: 16px; padding-left: 3px; color: #f0f0f0; font: 11px/16px "Noto Sans", sans-serif; }
.caption { width: 36px; padding-left: 4px; color: #c0c0c0; white-space: nowrap; }
.lock .icons button { width: 22px; height: 20px; }
.layer-list { display: flex; flex: 1; min-height: 0; background: #4f4f4f; }
.layer-items { flex: 1; }
.layer-scroll { width: 15px; background: #4b4b4b; }
.layer { display: flex; align-items: center; height: 25px; background: #6a6a6a; border-bottom: 1px solid #464646; }
.eye { width: 30px; height: 24px; margin-right: 2px; background: #535353; }
.thumb { margin-right: 8px; }
.mini { fill: none; stroke: #666; }
.corners { fill: none; stroke: #fff; }
.layer-foot { display: flex; align-items: center; flex: none; justify-content: flex-end; height: 26px; padding-right: 21px; border-top: 1px solid #464646; }
.layer-foot button { position: relative; width: 27px; height: 24px; }
.off { opacity: .5; }
.fx { font: italic 13px/16px "Noto Sans", sans-serif; }
.drop::after { content: ""; position: absolute; right: 3px; bottom: 2px; border: solid transparent; border-width: 0 2px; border-top: 2px solid #fff; }
.taskbar { flex: none; height: 2px; background: linear-gradient(90deg, #05070a 0 48px, #333 48px 392px, #05070a 392px 589px, #333 589px 637px, #05070a 637px); }
```
